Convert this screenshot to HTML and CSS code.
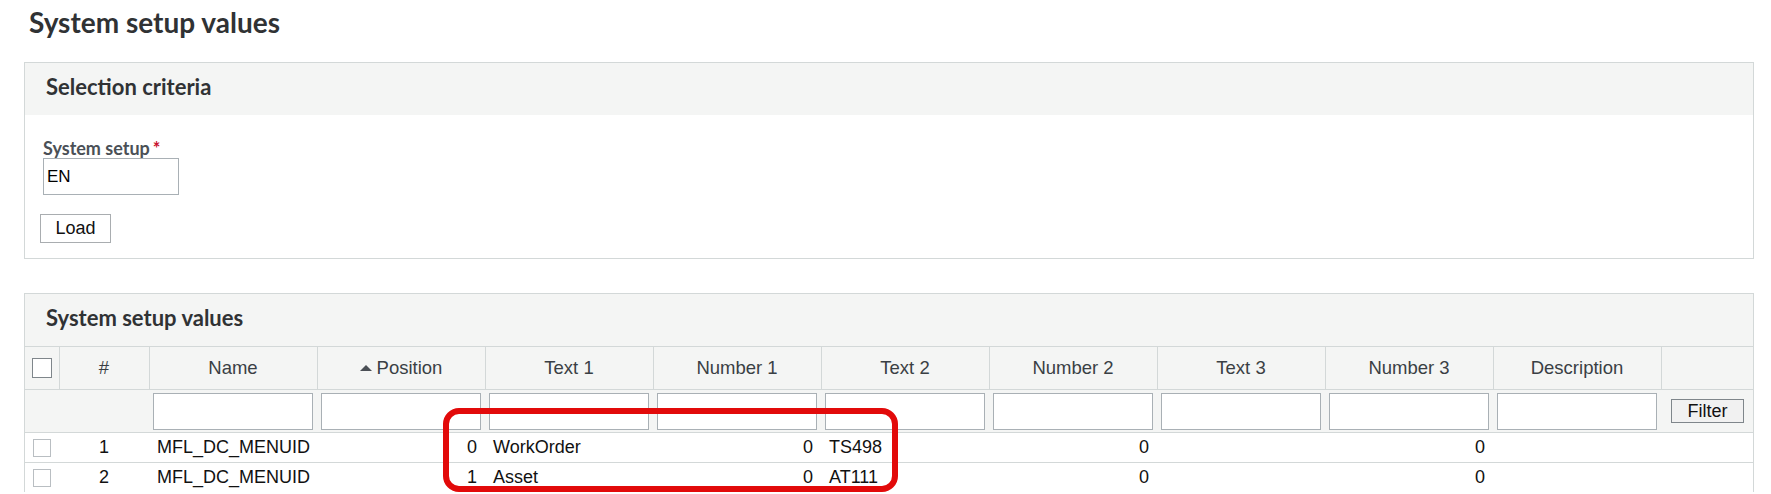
FILE: index.html
```html
<!DOCTYPE html>
<html lang="en">
<head>
<meta charset="utf-8">
<title>System setup values</title>
<link rel="stylesheet" href="styles.css">
</head>
<body>
<div class="page">
  <h1 class="page-title">System setup values</h1>

  <section class="panel">
    <h2 class="panel-head">Selection criteria</h2>
    <div class="panel-body">
      <label class="field-label" for="setup">System setup<span class="req">*</span></label>
      <input class="field-input" id="setup" type="text" value="EN">
      <div class="actions"><button class="btn load-btn" type="button">Load</button></div>
    </div>
  </section>

  <section class="panel panel-grid">
    <h2 class="panel-head">System setup values</h2>
    <div class="grid-wrap">
      <table class="grid">
        <colgroup>
          <col class="c-check"><col class="c-num"><col class="c-data"><col class="c-data"><col class="c-data"><col class="c-data"><col class="c-data"><col class="c-data"><col class="c-data"><col class="c-data"><col class="c-data"><col class="c-last">
        </colgroup>
        <thead>
          <tr class="head-row">
            <th><span class="chk chk-head"></span></th>
            <th>#</th>
            <th>Name</th>
            <th><span class="sort-up"></span>Position</th>
            <th>Text 1</th>
            <th>Number 1</th>
            <th>Text 2</th>
            <th>Number 2</th>
            <th>Text 3</th>
            <th>Number 3</th>
            <th>Description</th>
            <th></th>
          </tr>
          <tr class="filter-row">
            <td></td>
            <td></td>
            <td><input class="filter-input" type="text"></td>
            <td><input class="filter-input" type="text"></td>
            <td><input class="filter-input" type="text"></td>
            <td><input class="filter-input" type="text"></td>
            <td><input class="filter-input" type="text"></td>
            <td><input class="filter-input" type="text"></td>
            <td><input class="filter-input" type="text"></td>
            <td><input class="filter-input" type="text"></td>
            <td><input class="filter-input" type="text"></td>
            <td class="filter-cell"><button class="btn filter-btn" type="button">Filter</button></td>
          </tr>
        </thead>
        <tbody>
          <tr class="data-row">
            <td><span class="chk"></span></td>
            <td class="center">1</td>
            <td>MFL_DC_MENUID</td>
            <td class="num">0</td>
            <td>WorkOrder</td>
            <td class="num">0</td>
            <td>TS498</td>
            <td class="num">0</td>
            <td></td>
            <td class="num">0</td>
            <td></td>
            <td></td>
          </tr>
          <tr class="data-row">
            <td><span class="chk"></span></td>
            <td class="center">2</td>
            <td>MFL_DC_MENUID</td>
            <td class="num">1</td>
            <td>Asset</td>
            <td class="num">0</td>
            <td>AT111</td>
            <td class="num">0</td>
            <td></td>
            <td class="num">0</td>
            <td></td>
            <td></td>
          </tr>
        </tbody>
      </table>
      <div class="highlight"></div>
    </div>
  </section>
</div>
</body>
</html>
```

FILE: styles.css
```css
html, body {
  margin: 0;
  padding: 0;
  background: #ffffff;
}

.page {
  padding: 6px 17px 0 24px;
  font-family: "Liberation Sans", Arial, sans-serif;
  color: #222;
}

.page-title {
  margin: 0 0 24px 5px;
  font-family: Lato, "Open Sans", sans-serif;
  font-weight: 700;
  font-size: 28px;
  line-height: 32px;
  color: #303234;
}

.panel {
  border: 1px solid #d3d8d8;
  background: #fff;
}

.panel-head {
  margin: 0;
  height: 52px;
  padding: 0 21px;
  background: #f4f5f4;
  font-family: Lato, "Open Sans", sans-serif;
  font-weight: 700;
  font-size: 22px;
  line-height: 48px;
  color: #303234;
}

.panel-body {
  padding: 23px 18px 15px 18px;
  display: flex;
  flex-direction: column;
  align-items: flex-start;
}

.field-label {
  font-family: Lato, "Open Sans", sans-serif;
  font-weight: 700;
  font-size: 18px;
  line-height: 20px;
  color: #4a5056;
}

.req {
  color: #c8102e;
  margin-left: 3px;
}

.field-input {
  margin: 0;
  box-sizing: border-box;
  width: 136px;
  height: 37px;
  border: 1px solid #a9b0b5;
  padding: 0 3px;
  font-family: "Liberation Sans", Arial, sans-serif;
  font-size: 17px;
  color: #000;
  background: #fff;
}

.actions {
  margin-top: 19px;
  margin-left: -3px;
}

.btn {
  box-sizing: border-box;
  border: 1px solid #a9adb0;
  background: #fff;
  font-family: "Liberation Sans", Arial, sans-serif;
  font-size: 18px;
  color: #111;
  padding: 0;
}

.load-btn {
  width: 71px;
  height: 29px;
}

.panel-grid {
  margin-top: 34px;
  border-bottom: none;
}

.grid-wrap {
  position: relative;
}

.grid {
  width: 100%;
  border-collapse: collapse;
  table-layout: fixed;
  font-size: 18px;
}

.c-check { width: 34px; }
.c-num { width: 90px; }
.c-data { width: 168px; }
.c-last { width: auto; }

.head-row th {
  height: 42px;
  padding: 0;
  background: #f4f5f4;
  border-top: 1px solid #d3d8d8;
  border-left: 1px solid #d3d8d8;
  font-weight: 400;
  font-size: 18.5px;
  color: #3a3f44;
  text-align: center;
  vertical-align: middle;
}

.head-row th:first-child {
  border-left: none;
}

.filter-row td {
  height: 42px;
  padding: 0 4px;
  background: #f4f5f4;
  border-top: 1px solid #d3d8d8;
  vertical-align: middle;
}

.filter-input {
  display: block;
  box-sizing: border-box;
  width: 100%;
  height: 37px;
  margin: 0;
  border: 1px solid #a9b0b5;
  background: #fff;
}

.filter-cell {
  text-align: right;
}

.filter-btn {
  width: 73px;
  height: 24px;
  margin-right: 5px;
  background: #f1f1f1;
  border-color: #7f868b;
  font-size: 18px;
  line-height: 20px;
}

.data-row td {
  height: 29px;
  padding: 0 8px;
  border-top: 1px solid #d3d8d8;
  color: #111;
  vertical-align: middle;
  white-space: nowrap;
}

.data-row td:first-child {
  padding: 0 0 0 8px;
}

.center {
  text-align: center;
}

.num {
  text-align: right;
}

.chk {
  display: block;
  box-sizing: border-box;
  width: 18px;
  height: 18px;
  border: 1px solid #b9bec2;
  background: #fff;
}

.chk-head {
  width: 20px;
  height: 20px;
  margin-left: 7px;
  border-color: #7f868b;
}

.sort-up {
  display: inline-block;
  width: 0;
  height: 0;
  border-left: 6.5px solid transparent;
  border-right: 6.5px solid transparent;
  border-bottom: 6px solid #4a4f55;
  margin-right: 5px;
  vertical-align: 3px;
}

.highlight {
  position: absolute;
  left: 418px;
  top: 62px;
  width: 455px;
  height: 84px;
  box-sizing: border-box;
  border: 6px solid #e20a0a;
  border-radius: 16px;
  pointer-events: none;
}
```
